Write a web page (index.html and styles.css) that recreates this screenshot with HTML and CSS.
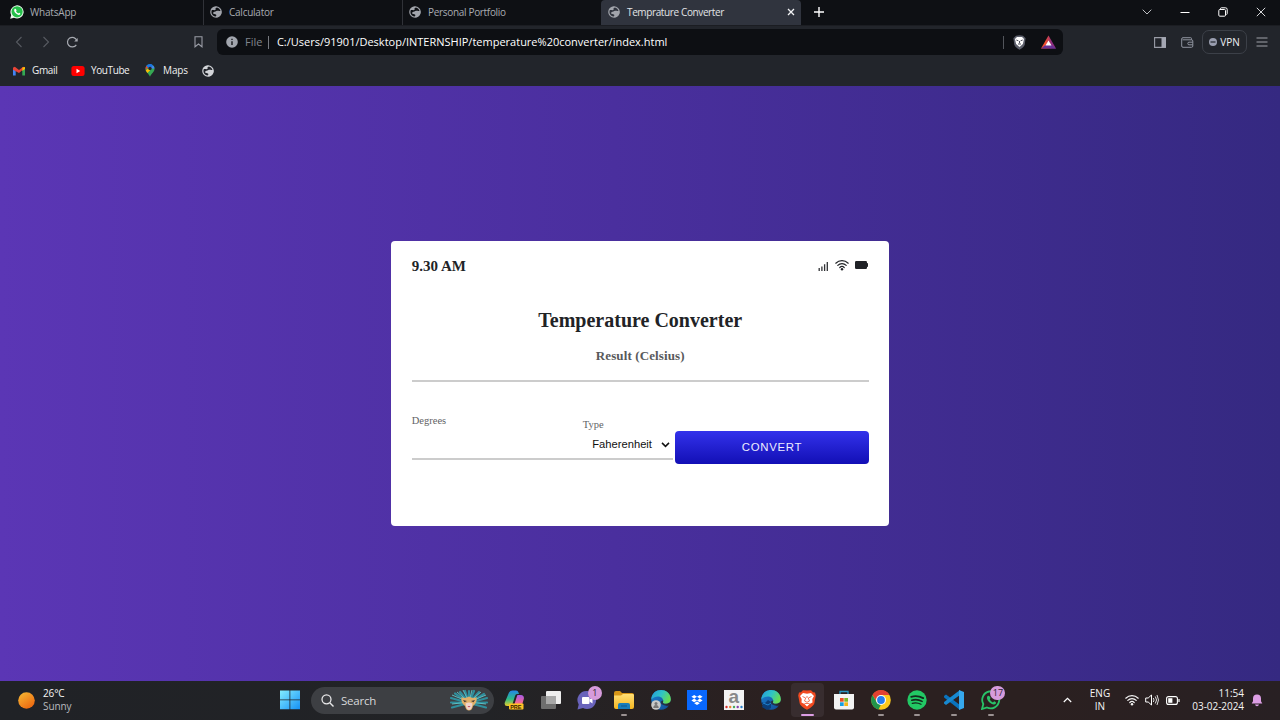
FILE: index.html
```html
<!DOCTYPE html>
<html lang="en">
<head>
<meta charset="utf-8">
<title>Temprature Converter</title>
<link rel="stylesheet" href="styles.css">
</head>
<body>
<svg class="defs" width="0" height="0">
  <defs>
    <symbol id="globe" viewBox="0 0 12 12"><circle cx="6" cy="6" r="5.2" fill="none" stroke="currentColor" stroke-width="1.2"/><path d="M1 4.2C2.5 3.6 4.3 4.5 5.3 4.1 6.3 3.7 4.8 2.6 5.9 1.9L7 .8C4 .2 1.400 1.800 1 4.200ZM6.300 5.100C7.800 4.500 9.300 5.300 11.200 4.700 12 8 9.800 11.400 6.200 11.300 5.200 10.400 6.900 9.600 6.200 8.700 5.300 7.800 3.300 8.300 2.900 7 3.600 5.800 5.200 5.900 6.300 5.100Z" fill="currentColor"/></symbol>
    <linearGradient id="win" x1="0" y1="0" x2="1" y2="1"><stop offset="0" stop-color="#83edff"/><stop offset="1" stop-color="#1590f5"/></linearGradient>
    <linearGradient id="sun" x1="0" y1="0" x2=".7" y2="1"><stop offset="0" stop-color="#f8bd35"/><stop offset="1" stop-color="#ec6710"/></linearGradient>
    <linearGradient id="bat" x1="0" y1="0" x2="1" y2="0"><stop offset=".3" stop-color="#f2502f"/><stop offset=".7" stop-color="#8d2c80"/></linearGradient>
    <linearGradient id="cop1" x1="0" y1="0" x2="0" y2="1"><stop offset="0" stop-color="#2386e8"/><stop offset=".55" stop-color="#2dbb86"/><stop offset="1" stop-color="#e8cd2b"/></linearGradient>
    <linearGradient id="cop2" x1="0" y1="0" x2="0" y2="1"><stop offset="0" stop-color="#a65be8"/><stop offset=".6" stop-color="#f0669a"/><stop offset="1" stop-color="#f5a253"/></linearGradient>
    <linearGradient id="edge1" x1="0" y1="0" x2="1" y2=".4"><stop offset="0" stop-color="#2498dc"/><stop offset=".55" stop-color="#2fc5c6"/><stop offset="1" stop-color="#66dc55"/></linearGradient>
    <linearGradient id="edge2" x1="0" y1="0" x2="1" y2="1"><stop offset="0" stop-color="#1b83d4"/><stop offset="1" stop-color="#124b93"/></linearGradient>
    <linearGradient id="folder" x1="0" y1="0" x2="0" y2="1"><stop offset="0" stop-color="#ffdf75"/><stop offset="1" stop-color="#f4b51f"/></linearGradient>
    <symbol id="edge" viewBox="0 0 20 20"><path d="M.3 9.500C1-3 19-3 19.800 9c.1 3-2 5-5 5 1.500.8 2.600.9 3.600.8C16.500 18.300 13.500 19.800 10 19.800 4 19.800 0 15 .3 9.500Z" fill="url(#edge2)"/><path d="M.3 9.500C1-3 19-3 19.800 9c.2 4-3.500 5.500-7 4.500-1.500-.5-.5-1.500-.6-3C12 6 4.500 4.500.3 9.500Z" fill="url(#edge1)"/><path d="M12.200 10.500c.1 1.500-.9 2.500.6 3 2 .6 4 .3 5.400-.7l2 1.500-2 2.500-5-1.500c-4-1-5-4-1-4.800Z" fill="#292225" opacity=".75"/></symbol>
    <symbol id="wifi" viewBox="0 0 14 12"><g fill="none" stroke="currentColor" stroke-linecap="round" stroke-width="1.200"><path d="M.8 4.200a9 9 0 0 1 12.400 0"/><path d="M2.800 6.400a6 6 0 0 1 8.400 0"/><path d="M4.800 8.500a3.200 3.200 0 0 1 4.400 0"/></g><circle cx="7" cy="10.300" r="1.200" fill="currentColor"/></symbol>
  </defs>
</svg>
<div class="desktop">
  <header class="tabs">
    <div class="tab tab-first"><svg width="14" height="14" viewBox="0 0 14 14"><path d="M.2 13.800 1.200 10A6.600 6.600 0 1 1 4 12.800Z" fill="#eefbef"/><circle cx="7.100" cy="6.800" r="5.600" fill="#25c04a"/><path d="M4.800 3.800c-1.400 1.200-.4 3.200.9 4.500s3.300 2.300 4.500.9c.5-.7-.4-1.200-1.100-1.500l-.8.700c-1.100-.5-1.800-1.200-2.300-2.200l.6-.8c-.4-1-.9-1.700-1.800-1.600Z" fill="#fff"/></svg><span class="t-wa">WhatsApp</span></div>
    <div class="tab"><svg width="12" height="12"><use href="#globe"/></svg><span class="t-calc">Calculator</span></div>
    <div class="tab"><svg width="12" height="12"><use href="#globe"/></svg><span class="t-port">Personal Portfolio</span></div>
    <div class="tab tab-active"><svg width="12" height="12"><use href="#globe"/></svg><span class="t-temp">Temprature Converter</span><svg class="close" width="8" height="8" viewBox="0 0 8 8"><path d="m1 1 6 6M7 1 1 7" stroke="#f2f3f5" stroke-width="1.300"/></svg></div>
    <svg class="plus" width="12" height="12" viewBox="0 0 12 12"><path d="M6 1v10M1 6h10" stroke="#fff" stroke-width="1.400"/></svg>
    <div class="window-controls">
      <svg width="10" height="6" viewBox="0 0 10 6"><path d="m.7.7 4.300 4.300L9.300.7" fill="none" stroke="#bfc1c5"/></svg>
      <svg width="10" height="10" viewBox="0 0 10 10"><path d="M.5 5.500h9" stroke="#fff" stroke-width="1"/></svg>
      <svg width="10" height="10" viewBox="0 0 10 10"><rect x=".8" y="2.500" width="6.700" height="6.700" rx="1" fill="none" stroke="#fff"/><path d="M2.500 2V1.500Q2.500.8 3.500.8h4Q9.200.8 9.200 2.500v4q0 1-.7 1" fill="none" stroke="#fff"/></svg>
      <svg width="10" height="10" viewBox="0 0 10 10"><path d="m.8.8 8.400 8.400M9.200.8.8 9.200" stroke="#d6d7da"/></svg>
    </div>
  </header>

  <nav class="toolbar">
    <svg class="back" width="8" height="12" viewBox="0 0 8 12"><path d="M6.500 1 1.500 6l5 5" fill="none" stroke="#575a61" stroke-width="1.100"/></svg>
    <svg class="forward" width="8" height="12" viewBox="0 0 8 12"><path d="m1.500 1 5 5-5 5" fill="none" stroke="#575a61" stroke-width="1.100"/></svg>
    <svg class="reload" width="13" height="12" viewBox="0 0 13 12"><path d="M10.300 8.800A4.800 4.800 0 1 1 10.800 4.500" fill="none" stroke="#a7aab1" stroke-width="1.200"/><path d="M11.700 2v3.500H8.200Z" fill="#a7aab1"/></svg>
    <svg class="bookmark" width="9" height="12" viewBox="0 0 9 12"><path d="M1 .8h7v10L4.500 8 1 10.800Z" fill="none" stroke="#999ca5" stroke-width="1.100"/></svg>
    <div class="address">
      <svg class="info" width="12" height="12" viewBox="0 0 12 12"><circle cx="6" cy="6" r="5.800" fill="#a2a6ae"/><path d="M6 5.200V9M6 2.700v1.400" stroke="#16181c" stroke-width="1.400"/></svg>
      <span class="scheme">File</span><i class="bar"></i><span class="url">C:/Users/91901/Desktop/INTERNSHIP/temperature%20converter/index.html</span>
      <i class="bar bar-end"></i>
      <svg class="shield" width="13" height="15" viewBox="0 0 13 15"><path d="m3 .8 3.500-.5 3.500.5 2.600 2.400-.9 6.500q-.7 2.500-5.200 5-4.500-2.500-5.200-5L.4 3.200Z" fill="#5c5f6b"/><path d="M4 2h5l2 2-1.100 5L6.500 12 3.100 9 2 4Z" fill="#fff"/><path d="m3.300 5 2.100.8M9.700 5l-2.100.8M6.500 6v2.200M5 9h3" stroke="#4c4e59"/></svg>
      <svg width="15" height="14" viewBox="0 0 15 14"><path d="M7.500.5 15 13.500H0Z" fill="url(#bat)"/><path d="M0 13.500 4.500 10h6L15 13.500Z" fill="#683295"/><path d="m7.500 5.500 3 5h-6Z" fill="#fff"/></svg>
    </div>
    <svg class="panel" width="12" height="11" viewBox="0 0 12 11"><path d="M.6.600h10.800v9.800H.600Z" fill="none" stroke="#9a9da7" stroke-width="1.100"/><path d="M7.500.500H12v10H7.500Z" fill="#a4a7b3"/></svg>
    <svg class="wallet" width="13" height="11" viewBox="0 0 13 11"><path d="M10.500 2.800V1.500q0-.8-.8-.8H2Q.7.700.7 2v7q0 1.300 1.300 1.300h8.500q1.300 0 1.300-1.300V4q0-1.200-1.300-1.200H1.500M11.800 5.200H8Q6.800 5.200 6.800 6.500T8 7.800h3.800" fill="none" stroke="#8f939f"/></svg>
    <span class="vpn"><svg width="8" height="8" viewBox="0 0 8 8"><circle cx="4" cy="4" r="4" fill="#9a9eb0"/><path d="M1.500 4h5" stroke="#24272e" stroke-width="1.200"/></svg><span>VPN</span></span>
    <svg class="menu" width="12" height="10" viewBox="0 0 12 10"><path d="M.5 1h11M.5 5h11M.5 9h11" stroke="#a0a3aa"/></svg>
  </nav>

  <nav class="bookmarks">
    <svg width="12" height="10" viewBox="0 0 12 10"><path d="M0 1.500V9.500h2.700V4Z" fill="#4285f4"/><path d="M12 1.500v8H9.300V4Z" fill="#34a853"/><path d="m0 1.800 1.800-1L6 4.100 10.200.8l1.800 1L6 7 0 3.800Z" fill="#ea4335"/><path d="M9.300 1.500 12 1v2l-2.700 2Z" fill="#fbbc04"/></svg><span class="b-gmail">Gmail</span>
    <svg width="14" height="10" viewBox="0 0 14 10"><rect x=".4" width="13.200" height="10" rx="2.500" fill="#f00"/><path d="m5.500 2.800 3.700 2.200-3.700 2.200Z" fill="#fff"/></svg><span class="b-yt">YouTube</span>
    <svg width="10" height="13" viewBox="0 0 10 13"><path d="M5 .2A4.500 4.500 0 0 0 .5 4.700c0 3.500 3 4.300 4.500 8 1.500-3.700 4.500-4.500 4.500-8A4.500 4.500 0 0 0 5 .2Z" fill="#35a853"/><path d="M1.200 2 5 5 8 1.500C6-1 2.600.1 1.200 2Z" fill="#1a73e8"/><path d="M1.200 2 3 3.500.600 5.800Q.3 3.500 1.200 2Z" fill="#ea4335"/><path d="M.7 6.200 6 2.800 5 6.400 2.300 9Z" fill="#fbbc04"/><path d="m5 4.700 3-3.300q1.500 1.200 1.500 3Z" fill="#4285f4"/><circle cx="5" cy="4.500" r="1.700" fill="#22252c"/></svg><span class="b-maps">Maps</span>
    <svg class="b-globe" width="12" height="12"><use href="#globe"/></svg>
  </nav>

  <main class="page">
    <section class="card">
      <div class="status"><b>9.30 AM</b>
        <span class="signals">
          <svg width="11" height="11" viewBox="0 0 11 11"><path d="M1.200 8V11M3.900 6.500V11M6.600 4.300V11M9.300 2V11" stroke="#303235" stroke-width="1.300"/></svg>
          <svg width="14" height="12"><use href="#wifi"/></svg>
          <svg width="13" height="8" viewBox="0 0 13 8"><rect width="12" height="8" rx="1.200" fill="#202226"/><path d="M11 2h1.300q.7 0 .7 1v2q0 1-.7 1H11Z" fill="#202226"/></svg>
        </span>
      </div>
      <h1>Temperature Converter</h1>
      <h2>Result (Celsius)</h2>
      <div class="form">
        <label class="degrees">Degrees</label>
        <div class="type"><label>Type</label><div class="select"><span>Faherenheit</span><svg width="9" height="6" viewBox="0 0 9 6"><path d="m1 .9 3.500 3.500L8 .9" fill="none" stroke="#111" stroke-width="1.500"/></svg></div></div>
        <button>CONVERT</button>
      </div>
    </section>
  </main>

  <footer class="taskbar">
    <div class="weather"><svg width="17" height="17"><circle cx="8.500" cy="8.500" r="8.300" fill="url(#sun)"/></svg><div><p class="temp">26°C</p><p class="sunny">Sunny</p></div></div>
    <svg class="start" width="20" height="20" viewBox="0 0 20 20"><path d="M0 .5h9.500v9H0ZM10.300.5H20v9h-9.700ZM0 10.300h9.500v9H0ZM10.300 10.300H20v9h-9.700Z" fill="url(#win)"/></svg>
    <div class="search">
      <svg width="13" height="13" viewBox="0 0 13 13"><circle cx="5.500" cy="5.300" r="4.500" fill="none" stroke="#e7e7e8" stroke-width="1.300"/><path d="m8.800 8.700 3.700 3.700" stroke="#e7e7e8" stroke-width="1.400"/></svg>
      <span>Search</span>
      <svg class="mask" width="40" height="22" viewBox="0 0 40 22"><g stroke="#2f8e9c" stroke-width="2.200" stroke-linecap="round"><path d="M20 14 2 9M20 14 2 13.500M20 14 3 18.500M20 14 6 4.500M20 14 11 3M20 14 16 2M20 14 20 2M20 14 25 2M20 14 30 3M20 14 35 5M20 14 38 9M20 14 38 13.500M20 14 37 18.500"/></g><g stroke="#62c6ca" stroke-width=".9"><path d="M20 13 3 6M20 13 3 15M20 13 8 3M20 13 14 1M20 13 23 1M20 13 32 3M20 13 37 6M20 13 37 15"/></g><path d="M12.500 8q3.500 2 7.500-.5 4 2.500 7.500.5 1 6-3.500 9-1 4.500-4 4.500t-4-4.500Q11.500 14 12.500 8Z" fill="#e0b069"/><path d="M16.500 14.500q3.500-2 7 0-.5 6-3.500 6.500-3-.5-3.500-6.500Z" fill="#efd3cb"/><path d="m14 11 4 1-2.500 1.300ZM26 11l-4 1 2.500 1.300Z" fill="#443a35"/><path d="M18.500 17.500q1.500-.8 3 0-1.500 1.500-3 0Z" fill="#b94253"/></svg>
    </div>
    <div class="apps">
      <span class="app"><svg width="20" height="20" viewBox="0 0 20 20"><path d="M5 2.500Q6 .5 8.500.5H12q2 0 2.500 2L15 4h-2q-1.500 0-2 2L8.500 14q-.8 2-3 2H3Q0 16 .8 12.500Z" fill="url(#cop1)"/><path d="M13.500 5H17q3.500.5 2.800 4L18 15q-.7 2-3 2h-5q-2 0-1.500-1Q10 16 10.500 14L13 6Z" fill="url(#cop2)"/><rect x="5" y="13.500" width="14.500" height="6" rx="1" fill="#ffc225"/><text x="6.200" y="18.700" class="pre">PRE</text></svg></span>
      <span class="app"><svg width="20" height="20" viewBox="0 0 20 20"><rect x="5" y="1" width="15" height="13" rx="1" fill="#eee"/><rect y="6" width="15" height="13" rx="1" fill="#777" opacity=".9"/><path d="M5 6h10v8H5Z" fill="#a8a8a8"/></svg></span>
      <span class="app"><svg width="20" height="20" viewBox="0 0 20 20"><path d="M10 1a9 9 0 1 1-4 17L.5 19.500l1.200-5A9 9 0 0 1 10 1Z" fill="#6963bb"/><rect x="5" y="7" width="7.500" height="7" rx="1" fill="#fff"/><path d="m12.500 9.500 3-2v6l-3-2Z" fill="#fff"/></svg><b class="badge">1</b></span>
      <span class="app running"><svg width="20" height="20" viewBox="0 0 20 20"><path d="M0 3q0-2 2-2h4l2 2h10q2 0 2 2v2H0Z" fill="#d79617"/><path d="M0 5.500h7L9 4h10q1 0 1 1.500V17q0 2-2 2H2q-2 0-2-2Z" fill="url(#folder)"/><path d="M4 19v-4q0-2 2-2h8q2 0 2 2v4Z" fill="#167cbb"/><path d="M7 16h6" stroke="#0c548c"/></svg></span>
      <span class="app"><svg width="20" height="20" viewBox="0 0 20 20"><use href="#edge"/><circle cx="5" cy="15" r="4.800" fill="#c8cac9"/><circle cx="5" cy="13.500" r="1.500" fill="#777"/><path d="M2.300 18q0-3 2.700-3t2.700 3Z" fill="#777"/></svg></span>
      <span class="app"><svg width="20" height="20" viewBox="0 0 20 20"><path d="M0 0h20v20H0Z" fill="#0868ff"/><path d="m7.200 5 2.800 1.800-2.800 1.800-2.800-1.800ZM12.800 5l2.800 1.800-2.800 1.800L10 6.800ZM7.200 8.600l2.800 1.800-2.800 1.800-2.800-1.800ZM12.800 8.600l2.800 1.800-2.800 1.800-2.800-1.800ZM10 11.400l2.800 1.800L10 15l-2.800-1.800Z" fill="#fff"/></svg></span>
      <span class="app"><svg class="amazon-icon" width="20" height="20" viewBox="0 0 20 20"><path d="M0 0h20v20H0Z" fill="#f3f3f3"/><text x="4.500" y="13" class="amazon">a</text><circle cx="2.500" cy="17" r="1.200" fill="#d6302d"/><circle cx="6.200" cy="17" r="1.200" fill="#eb842d"/><circle cx="10" cy="17" r="1.200" fill="#43a85b"/><circle cx="13.700" cy="17" r="1.200" fill="#8440af"/><circle cx="17.500" cy="17" r="1.200" fill="#297ecb"/></svg></span>
      <span class="app"><svg width="20" height="20" viewBox="0 0 20 20"><use href="#edge"/><path d="m0 12 4 1 3-3 3 2v6l-4 2-5-3 1-2Z" fill="#0c3e79"/><path d="m2 13 5 2 3-2" stroke="#1e83d2" fill="none"/></svg></span>
      <span class="app running selected"><svg width="18" height="20" viewBox="0 0 18 20"><path d="m5 .2 4 .3 4-.3 2 2 2 .3.800 3-1.500 8q-1 3-7.300 6.300Q2.700 16.500 1.700 13.500l-1.500-8 .8-3 2-.3Z" fill="#f24a20"/><path d="m5 3 4 .7L13 3l3 3-1.700 3 .2 3.500-3 1.500L9 16.500 6.500 14l-3-1.500L3.700 9 2 6Z" fill="#fff"/><path d="M4.500 6.500 7.700 8 6.500 11l2.500 1.300 2.500-1.300-1.200-3 3.200-1.500M9 6v2M6.500 13.500h5" fill="none" stroke="#ef5630" stroke-width=".8"/></svg></span>
      <span class="app"><svg width="20" height="20" viewBox="0 0 20 20"><path d="M6 5V1.500h8V5" fill="none" stroke="#2796c5" stroke-width="1.300"/><path d="M0 4h20v13.500q0 2-2 2H2q-2 0-2-2Z" fill="#f3f3f3"/><path d="M6 8h3.700v3.700H6Z" fill="#e94f24"/><path d="M10.300 8H14v3.700h-3.700Z" fill="#79b82b"/><path d="M6 12.300h3.700V16H6Z" fill="#16a0e3"/><path d="M10.300 12.300H14V16h-3.700Z" fill="#f5b719"/></svg></span>
      <span class="app running"><svg width="20" height="20" viewBox="0 0 20 20"><circle cx="10" cy="10" r="9.800" fill="#fbc81b"/><path d="M1.500 5A9.800 9.800 0 0 1 18.500 5H10L6 12Z" fill="#e34132"/><path d="M1.500 5 6 12.500l4 2L7.500 19.500A9.800 9.800 0 0 1 1.500 5Z" fill="#22944a"/><circle cx="10" cy="10" r="5" fill="#fff"/><circle cx="10" cy="10" r="3.900" fill="#277ded"/></svg></span>
      <span class="app running"><svg width="20" height="20" viewBox="0 0 20 20"><circle cx="10" cy="10" r="9.700" fill="#22c864"/><g fill="none" stroke="#13291c" stroke-linecap="round"><path d="M4.200 6.800q6-1.800 12 1.300" stroke-width="1.900"/><path d="M4.800 10.200q5.500-1.500 10.300 1.200" stroke-width="1.600"/><path d="M5.300 13.300q4.700-1.200 8.700 1" stroke-width="1.300"/></g></svg></span>
      <span class="app running"><svg width="20" height="20" viewBox="0 0 20 20"><path d="m0 6 2-1.500L16 15v5L.1 7.500Z" fill="#0a73bd"/><path d="m0 13.500 2 1.500L16 5V0L.1 12Z" fill="#1789d1"/><path d="m15 0 5 2v16l-5 2Z" fill="#36a8ed"/></svg></span>
      <span class="app running"><svg width="20" height="20" viewBox="0 0 20 20"><path d="m1 19 1.300-5A8.500 8.500 0 1 1 6 17.500Z" fill="none" stroke="#28c368" stroke-width="1.800"/><path d="M6.900 5.700c-2 1.700-.4 4.700 1.400 6.500s5 3.300 6.600 1.300c.6-1-.6-1.700-1.700-2.200l-1.300 1.100c-1.500-.7-2.500-1.700-3.200-3.200l.9-1.200c-.5-1.500-1.300-2.500-2.700-2.300Z" fill="#28c368"/></svg><b class="badge badge-wide">17</b></span>
    </div>
    <div class="tray">
      <svg width="9" height="6" viewBox="0 0 9 6"><path d="M.8 5 4.500 1.300 8.200 5" fill="none" stroke="#fff" stroke-width="1.200"/></svg>
      <div class="lang">ENG<br>IN</div>
      <svg class="net" width="14" height="12"><use href="#wifi"/></svg>
      <svg class="sound" width="14" height="12" viewBox="0 0 14 12"><path d="M.7 4h2.500L6.500 1v10L3.200 8H.7Z" fill="none" stroke="#fff"/><path d="M8.300 4q1.500 2 0 4M10.300 2.500q2.500 3.500 0 7M12 1q3 5 0 10" fill="none" stroke="#ddd"/></svg>
      <svg class="power" width="14" height="9" viewBox="0 0 14 9"><rect x=".6" y=".6" width="10.800" height="7.800" rx="2" fill="none" stroke="#fff" stroke-width="1.100"/><rect x="2.200" y="2.200" width="4.200" height="4.600" fill="#fff"/><path d="M13 3v3" stroke="#fff" stroke-width="1.200"/></svg>
      <div class="clock"><p class="time">11:54</p><p class="date">03-02-2024</p></div>
      <svg class="bell" width="12" height="13" viewBox="0 0 12 13"><path d="M.7 9.500 2 7.300V4.500a4 4 0 0 1 8 0v2.800l1.300 2.200ZM4 10.500h4q-.5 1.800-2 1.800t-2-1.800Z" fill="#dc9ee4"/></svg>
    </div>
  </footer>
</div>
</body>
</html>
```
FILE: styles.css
```css
* { box-sizing: border-box; }
body { margin: 0; overflow: hidden; font-family: "Open Sans", "Noto Sans", sans-serif; }
p, h1, h2 { margin: 0; }
svg { display: block; flex: none; }
.defs { position: absolute; }
.desktop { width: 1280px; height: 720px; display: flex; flex-direction: column; white-space: nowrap; }

.tabs { height: 26px; flex: none; display: flex; background: #0e1014; border-bottom: 1px solid #1b1d22; color: #a9acb2; font-size: 10px; }
.tab { width: 199px; display: flex; align-items: center; padding: 0 0 1px 6px; gap: 7px; border-left: 1px solid #303238; }
.tab-first { width: 203px; padding-left: 10px; gap: 6px; border-left: 0; }
.tab-active { width: 200px; padding-left: 7px; background: #30343e; color: #e3e4e7; border-left: 0; border-radius: 4px 4px 0 0; }
.t-wa { letter-spacing: -.2px; }
.t-calc { letter-spacing: -.25px; }
.t-port { letter-spacing: -.32px; }
.t-temp { letter-spacing: -.38px; }
.tab svg { color: #a2a5ac; }
.close { margin-left: auto; margin-right: 6px; }
.plus { margin: 6px 0 0 12px; }
.window-controls { margin-left: auto; display: flex; align-items: center; gap: 28px; padding: 0 14px 1px 0; }

.toolbar { height: 32px; flex: none; display: flex; align-items: center; background: #22252b; }
.back { margin-left: 15px; }
.forward { margin-left: 19px; }
.reload { margin-left: 16px; }
.bookmark { margin-left: 115px; }
.address { width: 846px; height: 26px; margin-left: 14px; padding: 0 7px 0 9px; display: flex; align-items: center; background: #0d0f13; border-radius: 6px; color: #fff; font-size: 11px; }
.scheme, .url { padding-bottom: 2px; }
.scheme { margin-left: 7px; color: #81858d; }
.bar { width: 1px; height: 13px; margin: 0 7.500px 0 6px; background: #777a80; }
.bar-end { margin: 0 9px 0 auto; background: #52555b; }
.shield { margin-right: 15px; }
.panel { margin-left: 91px; }
.wallet { margin-left: 15px; }
.vpn { width: 45px; height: 24px; margin-left: 8px; border: 1px solid #3c4048; border-radius: 7px; display: flex; align-items: center; justify-content: center; gap: 3px; color: #eff0f4; font-size: 10px; }
.menu { margin-left: 9px; }

.bookmarks { height: 28px; flex: none; display: flex; align-items: center; padding: 0 0 3px 13px; background: #22252b; color: #f0f0f1; font-size: 10px; }
.bookmarks span { padding-bottom: 1px; }
.b-gmail { width: 26px; margin: 0 13px 0 7px; letter-spacing: -.35px; }
.b-yt { width: 39px; margin: 0 15px 0 6px; letter-spacing: -.4px; }
.b-maps { width: 25px; margin: 0 14px 0 8px; letter-spacing: -.1px; }
.b-globe { color: #d3d5d9; }

.page { flex: 1; display: flex; justify-content: center; padding-top: 155px; background: linear-gradient(90deg, #5b36b5, #4a2f9e 48%, #352981); }
.card { width: 498.500px; height: 285px; padding: 16px 20.500px 0 21px; border-radius: 4px; background: #fff; color: #212326; font-family: "Liberation Serif", serif; }
.status { display: flex; justify-content: space-between; height: 18px; font-size: 15px; line-height: 18px; }
.signals { display: flex; align-items: center; gap: 6px; height: 16px; padding-right: 1px; }
.card h1 { margin-top: 33px; text-align: center; font-size: 20px; line-height: 24px; }
.card h2 { padding: 15px 0 16px; text-align: center; font-size: 13px; line-height: 17px; letter-spacing: .12px; color: #58595b; border-bottom: 2px solid #ccc; }
.form { display: flex; height: 82px; }
.degrees { width: 171px; height: 78px; padding-top: 31px; border-bottom: 2px solid #ccc; }
.degrees, .type label { font-size: 10.500px; line-height: 15px; color: #626365; }
.type { width: 90.500px; height: 78px; padding-top: 35px; border-bottom: 2px solid #ccc; }
.type label { display: block; }
.select { display: flex; align-items: center; margin: 5px 0 0 9.500px; gap: 9px; color: #111; font: 11.200px/15px "Liberation Sans", sans-serif; }
button { flex: 1; height: 33px; margin: 49px 0 0 2px; padding: 0 0 2px; border: 0; border-radius: 4px; background: linear-gradient(#3332eb, #120fb5); color: #eeeeff; font: 11.400px "Liberation Sans", sans-serif; letter-spacing: .7px; }

.taskbar { height: 39px; flex: none; display: flex; align-items: center; background: linear-gradient(90deg, #202226, #222326 38%, #2b2020 60%, #2b2020 80%, #282023); color: #f5f5f5; font-size: 10px; padding-bottom: 1px; }
.weather { width: 280px; padding-left: 18px; display: flex; align-items: center; gap: 8px; line-height: 13px; }
.temp { letter-spacing: -.15px; }
.sunny { color: #b8babe; letter-spacing: -.1px; }
.search { width: 183px; height: 27px; margin-left: 11px; padding: 0 5px 0 10px; border-radius: 14px; background: #3d3f43; display: flex; align-items: center; gap: 7px; font-size: 11.500px; letter-spacing: -.2px; color: #d8d8da; }
.mask { margin-left: auto; }
.apps { display: flex; margin-left: 1.500px; }
.app { width: 36.700px; height: 34px; display: flex; align-items: center; justify-content: center; position: relative; }
.running::after { content: ""; position: absolute; bottom: 1px; width: 6px; height: 2px; border-radius: 1px; background: #9b9292; }
.selected { background: #382d2f; border-radius: 4px; width: 32.700px; margin: 0 2px; }
.selected::after { width: 13px; background: #dc9ee4; }
.badge { position: absolute; left: 19px; top: 3px; width: 14px; height: 14px; border-radius: 7px; background: #d69bdc; color: #2b202f; font-size: 9px; font-weight: 400; line-height: 13px; text-align: center; }
.badge-wide { width: 15px; left: 18px; }
.pre { font: bold 5.500px "Liberation Sans", sans-serif; fill: #332000; }
.amazon { font: bold 19px "Liberation Sans", sans-serif; fill: #888; }
.amazon-icon { overflow: visible; }
.tray { margin-left: auto; padding-right: 17px; display: flex; align-items: center; line-height: 13px; }
.lang { width: 26px; margin-left: 15px; text-align: center; }
.net { margin-left: 12px; }
.sound { margin-left: 6px; }
.power { margin-left: 7px; }
.clock { width: 60px; margin-left: 4px; text-align: right; display: flex; flex-direction: column; align-items: flex-end; }
.date { letter-spacing: -.05px; }
.bell { margin-left: 7px; }
```
